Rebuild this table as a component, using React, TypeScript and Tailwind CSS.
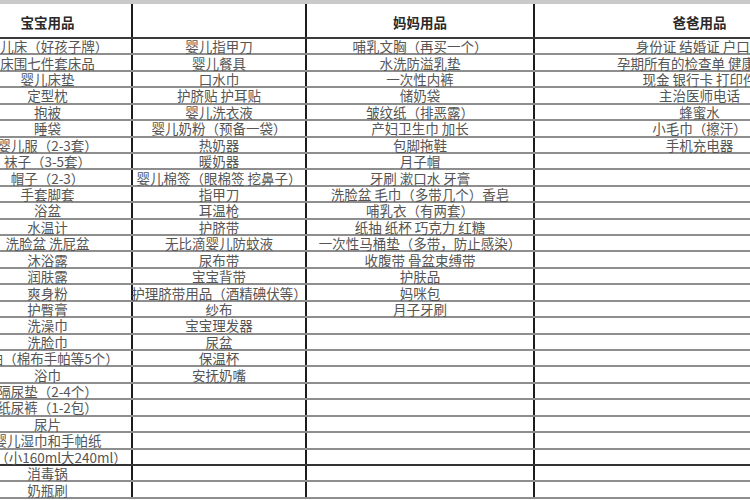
const baby = [
  "婴儿床（好孩子牌）",
  "床围七件套床品",
  "婴儿床垫",
  "定型枕",
  "抱被",
  "睡袋",
  "婴儿服（2-3套）",
  "袜子（3-5套）",
  "帽子（2-3）",
  "手套脚套",
  "浴盆",
  "水温计",
  "洗脸盆 洗屁盆",
  "沐浴露",
  "润肤露",
  "爽身粉",
  "护臀膏",
  "洗澡巾",
  "洗脸巾",
  "手帕（棉布手帕等5个）",
  "浴巾",
  "隔尿垫（2-4个）",
  "纸尿裤（1-2包）",
  "尿片",
  "婴儿湿巾和手帕纸",
  "奶瓶（小160ml大240ml）",
  "消毒锅",
  "奶瓶刷",
];

const babyMore = [
  "婴儿指甲刀",
  "婴儿餐具",
  "口水巾",
  "护脐贴 护耳贴",
  "婴儿洗衣液",
  "婴儿奶粉（预备一袋）",
  "热奶器",
  "暖奶器",
  "婴儿棉签（眼棉签 挖鼻子）",
  "指甲刀",
  "耳温枪",
  "护脐带",
  "无比滴婴儿防蚊液",
  "尿布带",
  "宝宝背带",
  "护理脐带用品（酒精碘伏等）",
  "纱布",
  "宝宝理发器",
  "尿盆",
  "保温杯",
  "安抚奶嘴",
];

const mom = [
  "哺乳文胸（再买一个）",
  "水洗防溢乳垫",
  "一次性内裤",
  "储奶袋",
  "皱纹纸（排恶露）",
  "产妇卫生巾 加长",
  "包脚拖鞋",
  "月子帽",
  "牙刷 漱口水 牙膏",
  "洗脸盆 毛巾（多带几个）香皂",
  "哺乳衣（有两套）",
  "纸抽 纸杯 巧克力 红糖",
  "一次性马桶垫（多带，防止感染）",
  "收腹带 骨盆束缚带",
  "护肤品",
  "妈咪包",
  "月子牙刷",
];

const dad = [
  "身份证 结婚证 户口本",
  "孕期所有的检查单 健康手册",
  "现金 银行卡 打印件",
  "主治医师电话",
  "蜂蜜水",
  "小毛巾（擦汗）",
  "手机充电器",
];

const ROWS = 28;
const cols = "grid grid-cols-[169px_174px_228px_331px]";
const cell = "flex items-center justify-center whitespace-nowrap border-r-2 border-[#1c1c1c]";

export default function App() {
  return (
    <div
      className="h-[500px] w-[750px] overflow-hidden bg-white text-[#555]"
      style={{ fontFamily: '"Noto Sans CJK SC", "Noto Sans", sans-serif' }}
    >
      <div className="-ml-[36px] w-[902px]">
        <div className="h-[4px] bg-[#c9c9c9]" />
        <div className={`${cols} h-[35px] border-b-2 border-[#3a3a3a] text-[13.5px] font-bold text-[#2a2a2a]`}>
          <div className={`${cell} pt-[3px]`}>宝宝用品</div>
          <div className={cell} />
          <div className={`${cell} pt-[3px]`}>妈妈用品</div>
          <div className={`${cell} pt-[3px]`}>爸爸用品</div>
        </div>
        {Array.from({ length: ROWS }).map((_, i) => (
          <div
            key={i}
            className={`${cols} h-[16.43px] border-b-2 text-[13.5px] leading-[14px] ${
              i === 25 ? "border-[#333]" : "border-[#8e8e8e]"
            }`}
          >
            <div className={cell}>{baby[i] ?? ""}</div>
            <div className={cell}>{babyMore[i] ?? ""}</div>
            <div className={cell}>{mom[i] ?? ""}</div>
            <div className={cell}>{dad[i] ?? ""}</div>
          </div>
        ))}
      </div>
    </div>
  );
}
